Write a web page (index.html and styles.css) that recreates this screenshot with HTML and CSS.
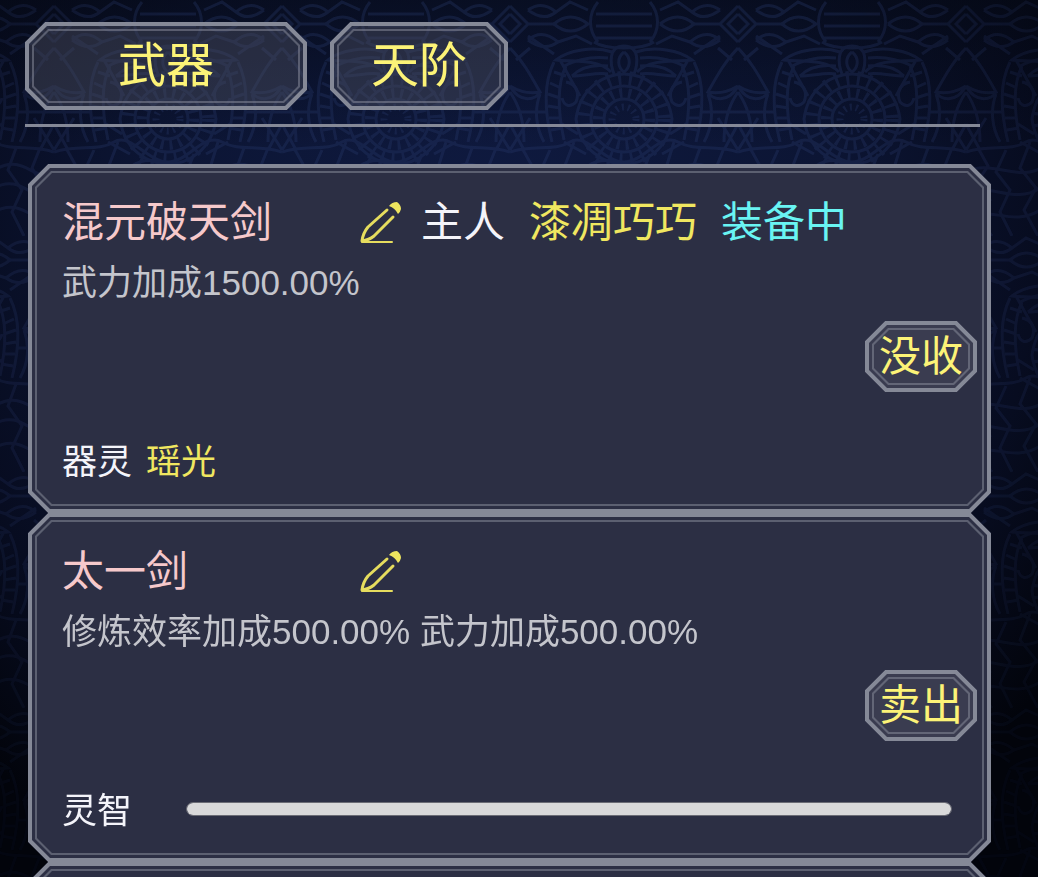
FILE: index.html
```html
<!DOCTYPE html>
<html lang="zh-CN">
<head>
<meta charset="utf-8">
<meta name="viewport" content="width=device-width, initial-scale=1">
<title>武器</title>
<link rel="stylesheet" href="styles.css">
</head>
<body>
<svg class="backdrop" aria-hidden="true">
  <defs>
    <pattern id="lace" x="54" y="0" width="228" height="236" patternUnits="userSpaceOnUse">
      <g fill="none" stroke="#2b3b6d" stroke-width="3">
        <circle cx="114" cy="119" r="12" stroke-width="7" stroke-dasharray="2 4"/>
        <circle cx="114" cy="119" r="26" stroke-width="10" stroke-dasharray="3 6"/>
        <circle cx="114" cy="119" r="20"/>
        <circle cx="114" cy="119" r="41" stroke-width="14" stroke-dasharray="3 8"/>
        <circle cx="114" cy="119" r="33"/>
        <path d="M66 119C70 88 94 74 114 74S158 88 162 119C158 150 134 164 114 164S70 150 66 119Z"/>
        <path d="M114 46C98 46 100 64 104 74M114 46C130 46 128 64 124 74M114 52C106 58 108 68 114 72C120 68 122 58 114 52"/>
        <path d="M102 52C84 46 58 50 46 60C60 62 88 58 101 72M98 58C80 56 66 60 54 66M98 66C82 64 70 68 62 76M50 60L70 96M62 76C74 76 88 72 98 74"/>
        <path d="M126 52C144 46 170 50 182 60C168 62 140 58 127 72M130 58C148 56 162 60 174 66M130 66C146 64 158 68 166 76M178 60L158 96M166 76C154 76 140 72 130 74"/>
        <path d="M44 62C34 82 34 110 42 142M56 66C46 86 48 112 54 140M44 72L56 76M40 83L51 88M38 94L50 98M38 106L50 108M39 118L51 118M41 130L53 128M56 82C66 84 70 92 66 102C60 108 54 106 52 98M52 124L68 134M54 142L76 154"/>
        <path d="M184 62C194 82 194 110 186 142M172 66C182 86 180 112 174 140M184 72L172 76M188 83L177 88M190 94L178 98M190 106L178 108M189 118L177 118M187 130L175 128M172 82C162 84 158 92 162 102C168 108 174 106 176 98M176 124L160 134M174 142L152 154"/>
        <path d="M0 48C12 60 20 74 30 92C20 94 10 92 0 86M0 86C10 104 26 100 30 92M0 92C10 106 14 124 14 142M30 94C24 110 26 128 34 142M0 112H36M0 124L14 150M0 150L20 118"/>
        <path d="M228 48C216 60 208 74 198 92C208 94 218 92 228 86M228 86C218 104 202 100 198 92M228 92C218 106 214 124 214 142M198 94C204 110 202 128 194 142M228 112H192M228 124L214 150M228 150L208 118"/>
        <path d="M86 14H142M86 26H142M86 38H142M88 2C78 14 78 30 88 42M140 2C150 14 150 30 140 42M84 42C96 50 132 50 144 42"/>
        <path d="M44 24Q60 10 78 24Q60 38 44 24M150 24Q168 10 184 24Q168 38 150 24M18 10Q32 0 46 12Q34 22 18 10M210 10Q196 0 182 12Q194 22 210 10M18 40Q32 28 48 42Q34 52 18 40M210 40Q196 28 180 42Q194 52 210 40M46 12L60 2L78 10M182 12L168 2L150 10M48 42L66 36L82 44M180 42L162 36L146 44"/>
        <path d="M0 14L10 24L0 34M0 6L18 24L0 42M228 14L218 24L228 34M228 6L210 24L228 42M18 24H44M184 24H210M18 36L44 54M210 36L184 54M20 48L6 60M208 48L222 60"/>
        <path d="M0 152C24 144 44 152 60 142S94 162 114 162S150 132 168 142S204 144 228 152M0 172C26 158 54 184 78 166S146 182 172 168S210 184 228 172M0 194C20 180 48 206 74 188S140 204 168 188S208 206 228 194M0 218C20 204 48 228 74 210S140 228 168 212S208 226 228 218"/>
        <path d="M12 148L22 166L10 184L24 200L12 216L26 236M40 150L30 172L44 190L34 212L46 236M64 142L54 168L70 188L58 210L72 236M90 156L80 172L94 194L82 214L92 236M114 162L104 180L118 196L106 214L114 236M140 154L132 174L144 192L134 212L146 236M164 142L156 168L172 188L162 212L172 236M190 148L182 170L196 190L186 212L198 236M214 148L206 168L218 188L208 212L220 236"/>
      </g>
    </pattern>
  </defs>
  <rect width="100%" height="100%" fill="url(#lace)"/>
</svg>

<main class="page">
  <nav class="filters" aria-label="筛选">
    <button class="frame filter filter-wide" type="button">武器</button>
    <button class="frame filter" type="button">天阶</button>
  </nav>

  <section class="cards">
    <article class="frame card">
      <header class="card-head">
        <h2 class="name">混元破天剑</h2>
        <button class="edit" type="button" aria-label="改名">
          <svg class="pencil" viewBox="0 0 42 42" aria-hidden="true">
            <path class="line" d="M27 8L8 25Q3 31 2 39Q9 38 14 34L33 15"/>
            <path class="line thin" d="M2 40H32"/>
            <path class="cap" d="M29 4Q32 0 37 0Q41 3 41 7Q40 11 38 12Q35 6 29 4Z"/>
          </svg>
        </button>
        <span>主人</span>
        <span class="gold">漆凋巧巧</span>
        <span class="equipped">装备中</span>
      </header>
      <p class="effect">武力加成1500.00%</p>
      <div class="actions"><button class="frame action" type="button">没收</button></div>
      <footer class="card-foot"><span>器灵</span><span class="gold">瑶光</span></footer>
    </article>

    <article class="frame card">
      <header class="card-head">
        <h2 class="name">太一剑</h2>
        <button class="edit" type="button" aria-label="改名">
          <svg class="pencil" viewBox="0 0 42 42" aria-hidden="true">
            <path class="line" d="M27 8L8 25Q3 31 2 39Q9 38 14 34L33 15"/>
            <path class="line thin" d="M2 40H32"/>
            <path class="cap" d="M29 4Q32 0 37 0Q41 3 41 7Q40 11 38 12Q35 6 29 4Z"/>
          </svg>
        </button>
      </header>
      <p class="effect">修炼效率加成500.00% 武力加成500.00%</p>
      <div class="actions"><button class="frame action" type="button">卖出</button></div>
      <footer class="card-foot">
        <label class="meter-label" for="wit">灵智</label>
        <progress class="meter" id="wit" value="100" max="100"></progress>
      </footer>
    </article>

    <article class="frame card card-empty"></article>
  </section>
</main>
</body>
</html>
```
FILE: styles.css
```css
* { box-sizing: border-box; }

body {
  margin: 0;
  height: 100vh;
  overflow: hidden;
  background:
    linear-gradient(rgba(4, 7, 16, 0.55), rgba(4, 7, 16, 0) 150px),
    radial-gradient(ellipse 66% 88% at 47% 26%, #0f1a40 0%, #0c1534 50%, #070c20 80%, #02040b 100%);
  color: #f4f4fa;
  font-family: "Liberation Sans", "Noto Sans CJK SC", sans-serif;
}

.backdrop {
  position: fixed;
  inset: 0;
  z-index: -1;
  width: 100%;
  height: 100%;
  opacity: 0.32;
  -webkit-mask-image: radial-gradient(ellipse 72% 90% at 47% 24%, #000 50%, rgba(0, 0, 0, 0.2) 100%);
  mask-image: radial-gradient(ellipse 72% 90% at 47% 24%, #000 50%, rgba(0, 0, 0, 0.2) 100%);
}

.page { padding: 22px 47px 0 25px; }

/* Chamfered panel: thick outer ring, thin inner ring */
.frame {
  --c: 20px;
  --line: #858997;
  --r: calc(100% - var(--c));
  position: relative;
  clip-path: polygon(var(--c) 0, var(--r) 0, 100% var(--c), 100% var(--r), var(--r) 100%, var(--c) 100%, 0 var(--r), 0 var(--c));
}

.frame::before,
.frame::after {
  --t: 4px;
  --i: calc(100% - var(--t));
  --a: calc(var(--c) + 2px);
  --b: calc(100% - var(--a));
  --r: calc(100% - var(--c));
  content: "";
  position: absolute;
  inset: 0;
  background: var(--line);
  pointer-events: none;
  clip-path: polygon(evenodd,
    var(--c) 0, var(--r) 0, 100% var(--c), 100% var(--r), var(--r) 100%, var(--c) 100%, 0 var(--r), 0 var(--c), var(--c) 0,
    var(--a) var(--t), var(--b) var(--t), var(--i) var(--a), var(--i) var(--b), var(--b) var(--i), var(--a) var(--i), var(--t) var(--b), var(--t) var(--a), var(--a) var(--t));
}

.frame::after {
  --t: 2px;
  --a: calc(var(--c) + 1px);
  --c: 16px;
  inset: 7px;
  opacity: 0.55;
}

.filters {
  display: flex;
  gap: 23px;
  margin-right: 11px;
  padding-bottom: 14px;
  border-bottom: 3px solid #858997;
}

button {
  margin: 0;
  padding: 0;
  border: 0;
  color: #fcf377;
  font: inherit;
  cursor: pointer;
}

.filter {
  width: 178px;
  height: 88px;
  background: rgba(80, 84, 100, 0.42);
  font-size: 48px;
  line-height: 88px;
}

.filter-wide { width: 282px; }

.cards {
  display: flex;
  flex-direction: column;
  margin: 37px 0 0 3px;
}

.card {
  padding: 29px 14px 26px 34px;
  background: #2c2f44;
}

.card-empty { min-height: 349px; }

.card-head {
  display: flex;
  align-items: center;
  gap: 24px;
  font-size: 42px;
  line-height: 60px;
  white-space: nowrap;
}

.name {
  width: 274px;
  margin: 0;
  color: #f6c9cb;
  font-size: 42px;
  font-weight: 400;
}

.edit {
  display: flex;
  width: 42px;
  margin-right: -5px;
  background: none;
}

.pencil { width: 42px; height: 42px; }
.line { fill: none; stroke: #e6dd5e; stroke-width: 3; stroke-linecap: round; stroke-linejoin: round; }
.thin { stroke-width: 2; }
.cap { fill: #eee55f; }

.gold { color: #f0e760; }
.equipped { color: #69f4f3; }

.effect {
  margin: 0;
  color: #c4c5cc;
  font-size: 35px;
  line-height: 60px;
}

.actions {
  display: flex;
  justify-content: flex-end;
  margin-top: 8px;
}

.action {
  width: 112px;
  height: 71px;
  background: #3a3c50;
  font-size: 42px;
  line-height: 71px;
}

.card-foot {
  display: flex;
  align-items: center;
  gap: 14px;
  margin-top: 45px;
  font-size: 35px;
  line-height: 50px;
}

.meter-label { width: 110px; }

.meter {
  -webkit-appearance: none;
  appearance: none;
  flex: 1;
  min-width: 0;
  height: 14px;
  margin: 0 25px 4px 0;
  border: 1px solid #6b6c75;
  border-radius: 7px;
  background: #d9d9da;
  overflow: hidden;
}

.meter::-webkit-progress-bar { background: #6b6c75; }
.meter::-webkit-progress-value { background: #d9d9da; }
.meter::-moz-progress-bar { background: #d9d9da; }
```
